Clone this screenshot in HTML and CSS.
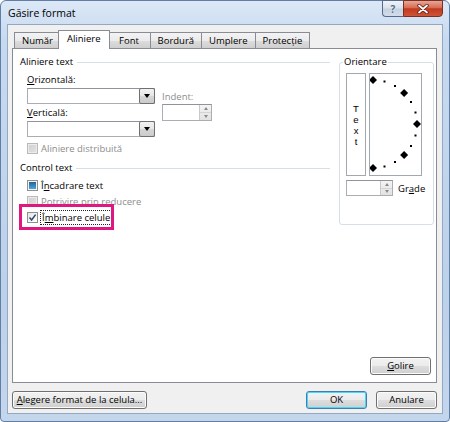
FILE: index.html
```html
<!DOCTYPE html>
<html lang="ro">
<head>
<meta charset="utf-8">
<title>Găsire format</title>
<link rel="stylesheet" href="styles.css">
</head>
<body>
<div class="window">
  <div class="titlebar">
    <span class="title">Găsire format</span>
    <div class="caption">
      <div class="cbtn help">?</div>
      <div class="cbtn close">
        <svg width="12" height="10" viewBox="0 0 12 10"><path d="M2 1.5 L10 8.5 M10 1.5 L2 8.5" stroke="#5a1a10" stroke-width="3.4" stroke-linecap="round"/><path d="M2 1.5 L10 8.5 M10 1.5 L2 8.5" stroke="#fff" stroke-width="1.8" stroke-linecap="round"/></svg>
      </div>
    </div>
  </div>
  <div class="client">
    <div class="tabs">
      <div class="tab">Număr</div>
      <div class="tab active">Aliniere</div>
      <div class="tab">Font</div>
      <div class="tab">Bordură</div>
      <div class="tab">Umplere</div>
      <div class="tab">Protecție</div>
    </div>
    <div class="panel">
      <div class="panel-top">
        <div class="leftcol">
          <div class="group-label"><span>Aliniere text</span><i class="rule"></i></div>
          <div class="align-row">
            <div class="combo-col">
              <div class="fld-label"><u>O</u>rizontală:</div>
              <div class="combo"><span class="drop"><i class="tri"></i></span></div>
              <div class="fld-label second"><u>V</u>erticală:</div>
              <div class="combo"><span class="drop"><i class="tri"></i></span></div>
            </div>
            <div class="indent-col">
              <div class="fld-label muted">Indent:</div>
              <div class="spin wide"><span class="spin-btns"><i class="up"></i><i class="down"></i></span></div>
            </div>
          </div>
          <div class="chk first"><span class="cb disabled"></span><span class="muted">Aliniere distribuită</span></div>
          <div class="group-label ctrl"><span>Control text</span><i class="rule"></i></div>
          <div class="chk rows"><span class="cb mixed"></span><span>Î<u>n</u>cadrare text</span></div>
          <div class="chk"><span class="cb disabled"></span><span class="muted">Potrivire prin reducere</span></div>
          <div class="chk marked">
            <span class="cb checked"><svg width="9" height="9" viewBox="0 0 9 9"><path d="M1.5 4.6 L3.6 7 L7.6 1.6" fill="none" stroke="#2b4a72" stroke-width="1.5"/></svg></span>
            <span class="focus">Î<u>m</u>binare celule</span>
            <span class="highlight"></span>
          </div>
        </div>
        <div class="orient">
          <div class="orient-label">Orientare</div>
          <div class="orient-main">
            <div class="textbox"><span>T</span><span>e</span><span>x</span><span>t</span></div>
            <div class="dial">
              <svg width="51" height="101" viewBox="0 0 51 101">
                <g fill="#000">
                  <polygon points="3,2 7,6 3,10 -1,6"/>
                  <polygon points="34.1,14.9 38.1,18.9 34.1,22.9 30.1,18.9"/>
                  <polygon points="47,46 51,50 47,54 43,50"/>
                  <polygon points="34.1,77.1 38.1,81.1 34.1,85.1 30.1,81.1"/>
                  <polygon points="3,90 7,94 3,98 -1,94"/>
                  <rect x="13.5" y="6.5" width="2" height="2"/>
                  <rect x="24" y="11" width="2" height="2"/>
                  <rect x="40" y="27" width="2" height="2"/>
                  <rect x="44.5" y="37.5" width="2" height="2"/>
                  <rect x="44.5" y="60.5" width="2" height="2"/>
                  <rect x="40" y="71" width="2" height="2"/>
                  <rect x="24" y="87" width="2" height="2"/>
                  <rect x="13.5" y="91.5" width="2" height="2"/>
                </g>
              </svg>
            </div>
          </div>
          <div class="deg-row">
            <div class="spin small"><span class="spin-btns"><i class="up"></i><i class="down"></i></span></div>
            <span class="deg-label">Gr<u>a</u>de</span>
          </div>
        </div>
      </div>
      <div class="panel-bottom">
        <div class="btn golire"><u>G</u>olire</div>
      </div>
    </div>
    <div class="footer">
      <div class="btn pick"><u>A</u>legere format de la celula...</div>
      <div class="btn ok default">OK</div>
      <div class="btn cancel">Anulare</div>
    </div>
  </div>
</div>
</body>
</html>
```
FILE: styles.css
```css
* { box-sizing: border-box; }
html, body { margin: 0; background: #fff; }
body {
  font-family: "Open Sans", "Noto Sans", sans-serif;
  font-size: 9.5px;
  color: #000;
}
u { text-decoration-thickness: 1px; text-underline-offset: 1px; }

.window {
  width: 450px;
  height: 422px;
  border: 1px solid #5f7fa6;
  border-radius: 6px 6px 4px 4px;
  background: linear-gradient(#dce8f6, #c6d9ef 40px, #bcd1ea 70%, #c4d6ec);
  padding: 0 6px 7px 6px;
  display: flex;
  flex-direction: column;
}
.titlebar { height: 23px; display: flex; align-items: flex-start; }
.title { margin: 5px 0 0 1px; font-size: 10.5px; line-height: 14px; color: #000; }
.caption { margin-left: auto; margin-top: -1px; display: flex; }
.cbtn {
  height: 17px;
  border: 1px solid #56698a;
  display: flex;
  align-items: center;
  justify-content: center;
}
.help {
  width: 21px;
  border-right: none;
  border-radius: 0 0 0 4px;
  background: linear-gradient(#eef3f9, #d7e2ee 48%, #c3d1e2 52%, #d2dde9);
  color: #5a6c84;
  font-weight: 700;
  font-size: 10px;
  text-shadow: 0 0 2px #fff;
}
.close {
  width: 40px;
  border-color: #7a2f24;
  border-radius: 0 0 4px 0;
  background: linear-gradient(#e8a797, #d66c53 45%, #c2391e 52%, #cf5438);
}

.client {
  flex: 1;
  background: #f0f0f0;
  border: 1px solid #93a8c2;
  padding: 5px 5px 4px 4px;
  display: flex;
  flex-direction: column;
}
.tabs {
  height: 18px;
  display: flex;
  align-items: flex-end;
  padding-left: 2px;
  position: relative;
  z-index: 1;
}
.tab {
  height: 16px;
  min-width: 43px;
  padding: 0 7px;
  border: 1px solid #898c95;
  border-bottom: none;
  margin-right: -1px;
  background: linear-gradient(#f3f3f3, #ebebeb 50%, #dddddd 51%, #cfcfcf);
  line-height: 15px;
  font-size: 9.5px;
  text-align: center;
}
.tab.active {
  height: 19px;
  margin: 0 -2px -1px -2px;
  padding: 0 8px;
  background: #fff;
  position: relative;
  z-index: 2;
  line-height: 16px;
}

.panel {
  flex: 1;
  background: #fff;
  border: 1px solid #898c95;
  display: flex;
  flex-direction: column;
  padding: 7px 2px 7px 7px;
}
.panel-top { display: flex; gap: 9px; }
.leftcol { width: 310px; display: flex; flex-direction: column; }
.group-label { display: flex; align-items: center; gap: 4px; height: 12px; line-height: 12px; }
.group-label .rule { flex: 1; height: 1px; background: #d5dfe5; }
.group-label.ctrl { margin-top: 6px; }

.align-row { display: flex; gap: 7px; margin: 5px 0 0 7px; }
.combo-col { width: 128px; display: flex; flex-direction: column; }
.fld-label { height: 14px; line-height: 14px; }
.fld-label.second { margin-top: 2px; }
.muted { color: #8d8d8d; }
.combo {
  height: 16px;
  margin-top: 1px;
  border: 1px solid #abadb3;
  border-top-color: #8f939c;
  background: #fff;
  display: flex;
  justify-content: flex-end;
}
.drop {
  width: 16px;
  margin: -1px -1px -1px 0;
  border: 1px solid #707070;
  border-radius: 2px;
  background: linear-gradient(#f2f2f2, #e6e6e6 50%, #d6d6d6 51%, #cbcbcb);
  display: flex;
  align-items: center;
  justify-content: center;
}
.tri {
  width: 0; height: 0;
  border-left: 3.5px solid transparent;
  border-right: 3.5px solid transparent;
  border-top: 4px solid #000;
}
.indent-col { padding-top: 17px; display: flex; flex-direction: column; }
.spin {
  height: 17px;
  border: 1px solid #abadb3;
  border-top-color: #8f939c;
  background: #fff;
  display: flex;
  justify-content: flex-end;
}
.spin.wide { width: 50px; }
.spin.small { width: 47px; height: 16px; }
.spin-btns {
  width: 12px;
  display: flex;
  flex-direction: column;
  border-left: 1px solid #c9c9c9;
  background: linear-gradient(#f4f4f4, #e2e2e2);
}
.spin-btns i { flex: 1; display: flex; align-items: center; justify-content: center; }
.spin-btns i::after {
  content: "";
  border-left: 2.5px solid transparent;
  border-right: 2.5px solid transparent;
}
.spin-btns .up { border-bottom: 1px solid #d4d4d4; }
.spin-btns .up::after { border-bottom: 3px solid #8a8a8a; }
.spin-btns .down::after { border-top: 3px solid #8a8a8a; }

.chk {
  height: 16px;
  display: flex;
  align-items: center;
  gap: 3px;
  margin-left: 7px;
  position: relative;
}
.chk.first { margin-top: 3px; }
.chk.rows { margin-top: 3px; }
.cb {
  width: 11px;
  height: 11px;
  flex: none;
  border: 1px solid #8e8f8f;
  background: linear-gradient(135deg, #dedede, #fdfdfd);
  display: flex;
  align-items: center;
  justify-content: center;
}
.cb.disabled { border-color: #b9b9b9; background: linear-gradient(135deg, #cfcfcf, #e3e3e3); box-shadow: inset 0 0 0 1px #ececec; }
.cb.mixed { background: linear-gradient(#1d5a8a, #3b8cc1 60%, #5fb0dd); box-shadow: inset 0 0 0 1px #f4f4f4; }
.cb.checked { background: linear-gradient(135deg, #e6e6e6, #fff); }
.focus { outline: 1px dotted #222; outline-offset: 0; padding: 0 1px; line-height: 13px; }
.highlight {
  position: absolute;
  left: -8px;
  top: -5px;
  width: 95px;
  height: 26px;
  border: 3px solid #e0177e;
}

.orient {
  width: 95px;
  margin-top: 6px;
  border: 1px solid #d5dfe5;
  border-radius: 3px;
  padding: 0 0 1px 6px;
  display: flex;
  flex-direction: column;
}
.orient-label {
  align-self: flex-start;
  margin: -7px 0 0 -3px;
  padding: 0 1px;
  height: 12px;
  line-height: 12px;
  background: #fff;
}
.orient-main { margin-top: 5px; display: flex; gap: 3px; height: 103px; }
.textbox {
  width: 20px;
  border: 1px solid #a3a8ae;
  display: flex;
  flex-direction: column;
  align-items: center;
  justify-content: center;
  font-family: "Liberation Sans", Arial, sans-serif;
  font-size: 9.5px;
  line-height: 11px;
}
.dial { width: 53px; border: 1px solid #a3a8ae; }
.dial svg { display: block; }
.deg-row { margin-top: 4px; display: flex; align-items: center; gap: 5px; }

.panel-bottom { margin-top: auto; display: flex; justify-content: flex-end; padding-right: 3px; }
.btn {
  height: 18px;
  border: 1px solid #707070;
  border-radius: 3px;
  background: linear-gradient(#f2f2f2, #ebebeb 50%, #dddddd 51%, #cfcfcf);
  box-shadow: inset 0 0 0 1px #fbfbfb;
  text-align: center;
  line-height: 16px;
}
.golire { width: 61px; }
.footer { margin-top: 8px; display: flex; }
.pick { width: 135px; }
.ok { width: 61px; margin-left: auto; }
.cancel { width: 61px; margin-left: 9px; }
.btn.default { border-color: #3c7fb1; box-shadow: inset 0 0 0 1px #48d7fb; }
```
